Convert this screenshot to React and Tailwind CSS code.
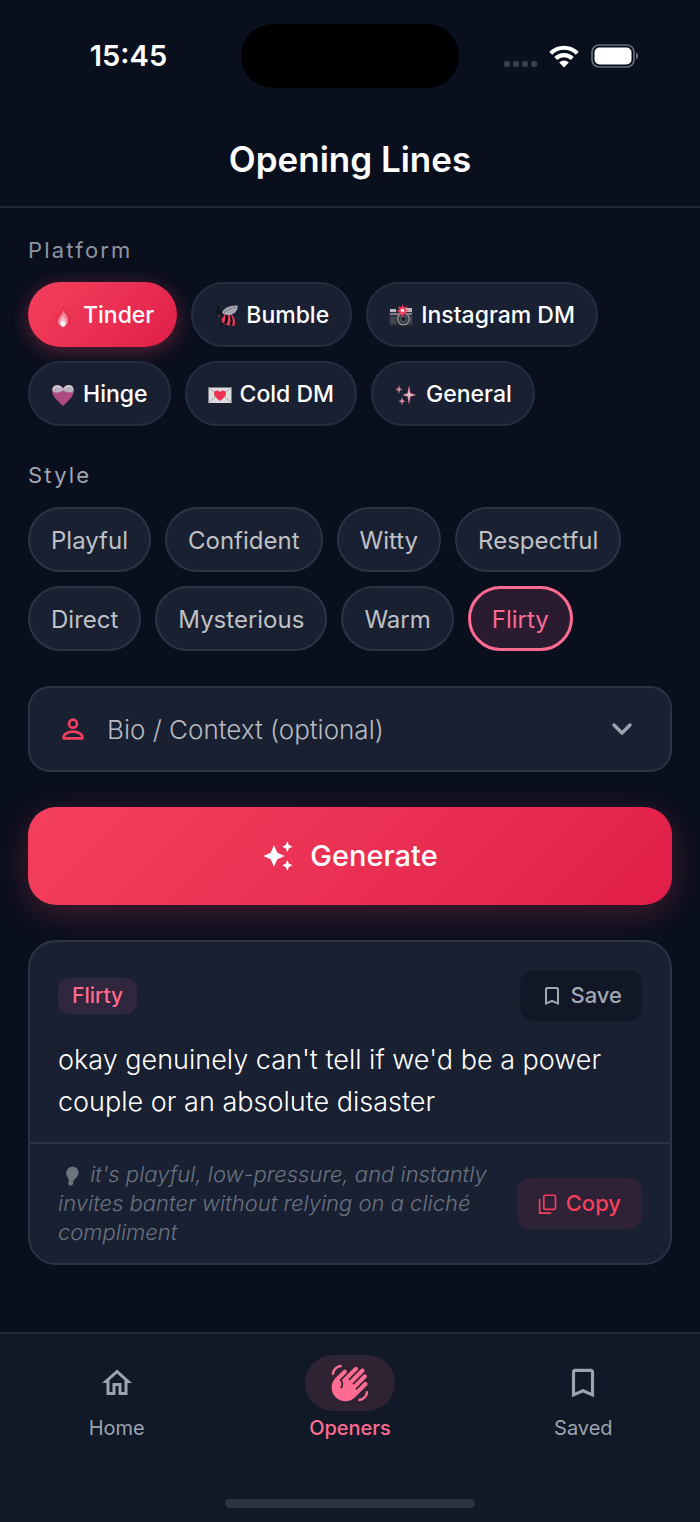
import React, { useState } from "react";
import {
  MdAutoAwesome,
  MdBookmarkBorder,
  MdOutlineHome,
  MdWavingHand,
} from "react-icons/md";

const FlameIcon = () => (
  <svg viewBox="0 0 24 24" className="w-6 h-6 shrink-0" aria-hidden="true">
    <path d="M12.500 2c.5 3 5 5.500 6.500 9 .500-1 .400-2 .200-3 2 3 2.500 6 1.300 9.300C19.300 21 16 23.500 12 23.500S4.700 21 3.600 17.300C2.700 14 3.800 11 5.600 9c-.100 1.500.100 2.500.700 3.300C7.500 8.500 11.500 6.500 12.500 2z" fill="#e8304f" />
    <path d="M12.300 6c.4 3 4.500 5.500 4.700 10 .2 4-2 6.500-5 6.500s-5.400-2.500-5-6c.3-3.500 4.800-6 5.300-10.500z" fill="#f4879a" />
    <path d="M12 12c.500 2 3 3.500 3 6.300 0 2.500-1.300 4.200-3 4.200s-3.200-1.700-3-4.200c.200-2.300 2.700-4.300 3-6.300z" fill="#f3c3cb" />
    <ellipse cx="12" cy="20" rx="2.200" ry="2.800" fill="#f4f4f4" />
  </svg>
);

const BeeIcon = () => (
  <svg viewBox="0 0 24 24" className="w-6 h-6 shrink-0" aria-hidden="true">
    <path d="M3 2l3 3M1 5l4 2M8 19l-1 3M13 21l-1 2.500" stroke="#090b12" strokeWidth="1.300" />
    <path d="M6 9c4-2 10-1 13 3 2 3 4 6 3.500 8.500C19 23 12 22 8 18z" fill="#e53e5b" />
    <path d="M10 8c2 3 2 7 0 11l2.500 1.500c2-4 2-9 .5-12.500zM15 9.500c2 4 2 8 .5 12h2.500c1.500-4 .7-7-1-10.500zM20 13c1.200 3 1.300 6 .7 8.500l1.800-1c.500-2-.500-5-2.500-7.500z" fill="#0b0d14" />
    <circle cx="5.500" cy="11" r="4.300" fill="#14141c" />
    <circle cx="5" cy="12" r="2" fill="#3d2937" />
    <path d="M8 9C9 4 16 1 23.500 1.500 24.500 6 20 12 12.500 11z" fill="#a7a9b2" />
    <path d="M10 8.500c3-2 7-4.500 12-5.500" stroke="#74717f" strokeWidth="1" fill="none" />
  </svg>
);

const CameraIcon = () => (
  <svg viewBox="0 0 24 24" className="w-6 h-6 shrink-0" aria-hidden="true">
    <path d="M.500 7h23v14.500H.500z" fill="#30323b" />
    <path d="M1 5h6v3H1zM16 4h7v4h-7z" fill="#b9bac0" />
    <path d="M1 9h22v2H1z" fill="#777a83" />
    <path d="M2 13v7M4 13v7M6 13v7M22 13v7" stroke="#60636c" strokeWidth=".8" />
    <circle cx="14.500" cy="15" r="6.300" fill="#a5a7ae" />
    <circle cx="14.500" cy="15" r="5.200" fill="#30323c" />
    <circle cx="14.500" cy="15" r="3.400" fill="#60636d" />
    <circle cx="14.500" cy="15" r="2.300" fill="#191b23" />
    <path d="M13.500 0l1.200 3.500L18.500 2l-2 3.500 3.500 1-3.500 1.300 2 3.200-3.700-1.300-1 3.800-1.300-3.700-3.900 1.500 2-3.300L7 6.700l3.600-1L9 2.300l3.500 1.200z" fill="#f43f5e" />
    <circle cx="13.500" cy="6.500" r="1.800" fill="#fbdce2" />
  </svg>
);

const HeartIcon = () => (
  <svg viewBox="0 0 24 24" className="w-6 h-6 shrink-0" aria-hidden="true">
    <path d="M12 23C7 18 1 13.500 1 7.500 1 1 9 .500 12 5c3-4.500 11-4 11 2.500C23 13.500 17 18 12 23z" fill="#ad4b80" />
    <path d="M1.500 8C.500 1 9 .500 12 5.500c3-5 11.500-4.500 10.500 2.500-3 2.500-7 1.500-10.500-.5C8.500 10 4 10.500 1.500 8z" fill="#b6afbc" />
    <path d="M2.500 6c1-3 5-4 8-1M14 5c2-3 6-2.500 7.500 0" stroke="#d9d8de" strokeWidth="1.200" fill="none" />
  </svg>
);

const LetterIcon = () => (
  <svg viewBox="0 0 24 24" className="w-6 h-6 shrink-0" aria-hidden="true">
    <path d="M.500 4.500h23v15.500H.500z" fill="#dedddf" />
    <path d="M.500 4.500l11.500 9 11.500-9M.500 20l8.500-8M23.500 20L15 12" stroke="#aaa9ae" strokeWidth="1" fill="none" />
    <path d="M12 18c-3-2.500-6-4.500-6-7.700C6 7 10.500 6.500 12 9c1.500-2.500 6-2 6 1.300 0 3.200-3 5.200-6 7.700z" fill="#ed3152" />
  </svg>
);

const SparklesIcon = () => (
  <svg viewBox="0 0 24 24" className="w-6 h-6 shrink-0" aria-hidden="true">
    <path d="M15 2l1.600 8L22.500 12l-5.900 1.800L15 22l-1.600-8.200L8 12l5.400-2z" fill="#c94b6a" />
    <path d="M15 4l1.100 6.500 4.900 1.500-4.900 1.300L15 20l-1-6.700-4.500-1.300 4.500-1.500z" fill="#d2c0c9" />
    <path d="M5 2l.8 3.200L8.500 6.500l-2.700 1L5 11l-.8-3.500L1.500 6.500l2.700-1.300zM8 14l.8 3 2.700 1.200-2.700 1L8 22.500l-.8-3.300-2.700-1L7.200 17z" fill="#d98a9f" />
  </svg>
);

const BulbIcon = () => (
  <svg viewBox="0 0 24 24" className="inline-block w-6 h-5 mr-0.5" aria-hidden="true">
    <path d="M15 1c5 0 8.500 4 7 9-1 4-5 5.500-6 8l-.500 4c-.500 2-5.500 2-5.500 0l.500-4.500C10.800 14.500 7 12.500 7.500 8.500 8 4 11 1 15 1z" fill="#6e7480" />
    <path d="M10.500 18l5.500.7" stroke="#545b69" strokeWidth="1" />
  </svg>
);

const PersonIcon = () => (
  <svg viewBox="0 0 24 24" className="w-8 h-8 shrink-0" fill="none" stroke="#f43f5e" strokeWidth="2" strokeLinejoin="round" aria-hidden="true">
    <circle cx="12" cy="8" r="3" />
    <path d="M5 18c0-2.700 4.700-4 7-4s7 1.300 7 4v1H5z" />
  </svg>
);

const ChevronIcon = () => (
  <svg viewBox="0 0 24 24" className="w-8 h-8 shrink-0" fill="none" stroke="#9ca3af" strokeWidth="2.600" strokeLinecap="round" strokeLinejoin="round" aria-hidden="true">
    <path d="M6 9l6 6 6-6" />
  </svg>
);

const CopyIcon = () => (
  <svg viewBox="0 0 24 24" className="w-5 h-5 shrink-0" fill="none" stroke="currentColor" strokeWidth="2" strokeLinecap="round" strokeLinejoin="round" aria-hidden="true">
    <rect x="7" y="1.500" width="14" height="17" rx="1.500" />
    <path d="M2 6.500V23h13" />
  </svg>
);

const WifiIcon = () => (
  <svg viewBox="0 0 30 23" className="w-[30px] h-[23px]" fill="none" stroke="#fff" strokeWidth="4.200" aria-hidden="true">
    <path d="M1.700 8.200a19 19 0 0 1 26.600 0" />
    <path d="M6.700 13.600a11.800 11.800 0 0 1 16.600 0" />
    <path d="M15 22.500l-4.800-5a7 7 0 0 1 9.600 0z" fill="#fff" stroke="none" />
  </svg>
);

const BatteryIcon = () => (
  <svg viewBox="0 0 48 24" className="w-12 h-6" aria-hidden="true">
    <rect x="1" y="1" width="42" height="22" rx="7" fill="none" stroke="#676b78" strokeWidth="1.700" />
    <rect x="3.500" y="3.500" width="37" height="17" rx="5" fill="#fff" />
    <path d="M45 8.500c3 1 3 6 0 7z" fill="#676b78" />
  </svg>
);

const platforms = [
  { name: "Tinder", icon: <FlameIcon /> },
  { name: "Bumble", icon: <BeeIcon /> },
  { name: "Instagram DM", icon: <CameraIcon /> },
  { name: "Hinge", icon: <HeartIcon /> },
  { name: "Cold DM", icon: <LetterIcon /> },
  { name: "General", icon: <SparklesIcon /> },
];

const styles = [
  "Playful",
  "Confident",
  "Witty",
  "Respectful",
  "Direct",
  "Mysterious",
  "Warm",
  "Flirty",
];

const StatusBar = () => (
  <div className="grid grid-cols-[1fr_218px_1fr] items-center pt-6">
    <div className="pl-4 text-center text-[29px] leading-8 font-semibold">
      15:45
    </div>
    <div className="h-16 rounded-full bg-black" />
    <div className="flex items-center justify-center pr-4">
      <div className="flex gap-[3px] pt-4 mr-3">
        <span className="size-1.5 rounded-xs bg-[#3b3f4c]" />
        <span className="size-1.5 rounded-xs bg-[#3b3f4c]" />
        <span className="size-1.5 rounded-xs bg-[#3b3f4c]" />
        <span className="size-1.5 rounded-xs bg-[#3b3f4c]" />
      </div>
      <WifiIcon />
      <div className="ml-3">
        <BatteryIcon />
      </div>
    </div>
  </div>
);

const BottomNav = () => (
  <nav className="mt-auto border-t-2 border-[#1f2a3c] bg-[#111827] pt-[21px] pb-3.5">
    <div className="grid grid-cols-3 text-[20px] leading-7 text-[#9ca3af]">
      <a href="#home" className="flex flex-col items-center gap-[3px]">
        <span className="flex h-14 items-center">
          <MdOutlineHome className="w-9 h-9" />
        </span>
        Home
      </a>
      <a
        href="#openers"
        className="flex flex-col items-center gap-[3px] font-medium text-[#ff6b91]"
        aria-current="page"
      >
        <span className="flex h-14 w-[90px] items-center justify-center rounded-full bg-[#2f2333]">
          <MdWavingHand className="w-10 h-10" />
        </span>
        Openers
      </a>
      <a href="#saved" className="flex flex-col items-center gap-[3px]">
        <span className="flex h-14 items-center">
          <MdBookmarkBorder className="w-[38px] h-[38px]" />
        </span>
        Saved
      </a>
    </div>
    <div className="mx-auto mt-[57px] h-[9px] w-[250px] rounded-full bg-[#2f333e]" />
  </nav>
);

const App = () => {
  const [platform, setPlatform] = useState("Tinder");
  const [style, setStyle] = useState("Flirty");
  const [showBio, setShowBio] = useState(false);
  const [saved, setSaved] = useState(false);

  const line =
    "okay genuinely can't tell if we'd be a power couple or an absolute disaster";

  return (
    <div className="flex min-h-screen flex-col bg-[#0a0f1e] font-['Inter',sans-serif] text-white">
      <StatusBar />
      <header className="border-b-2 border-[#1f2a3c] pt-[49px] pb-6">
        <h1 className="text-center text-[35px] leading-[45px] font-semibold">
          Opening Lines
        </h1>
      </header>

      <main className="flex flex-col gap-[35px] px-7 pt-7 pb-8">
        <section>
          <h2 className="mb-[18px] text-[22px] leading-7 tracking-widest text-[#8d94a2]">
            Platform
          </h2>
          <div className="flex flex-wrap gap-3.5">
            {platforms.map((item) => (
              <button
                key={item.name}
                type="button"
                aria-pressed={platform === item.name}
                onClick={() => setPlatform(item.name)}
                className={`flex h-[65px] items-center gap-2 rounded-full border-2 px-[21px] pt-0.5 text-[23px] font-medium ${
                  platform === item.name
                    ? "border-transparent bg-linear-135 from-[#f43f5e] to-[#e11d48] bg-origin-border shadow-[0_4px_20px_rgba(244,63,94,0.35)]"
                    : "border-[#252e40] bg-[#182031]"
                }`}
              >
                {item.icon}
                {item.name}
              </button>
            ))}
          </div>
        </section>

        <section>
          <h2 className="mb-[18px] text-[22px] leading-7 tracking-widest text-[#a2a6b1]">
            Style
          </h2>
          <div className="flex flex-wrap gap-3.5">
            {styles.map((name) => (
              <button
                key={name}
                type="button"
                aria-pressed={style === name}
                onClick={() => setStyle(name)}
                className={`h-[65px] rounded-full px-[21px] pt-0.5 text-[24px] ${
                  style === name
                    ? "border-3 border-[#ff6b91] bg-[#2a1b31] text-[#ff6b91]"
                    : "border-2 border-[#2d3344] bg-[#182031] text-[#c0c1c5]"
                }`}
              >
                {name}
              </button>
            ))}
          </div>
        </section>

        <div>
          <button
            type="button"
            aria-expanded={showBio}
            onClick={() => setShowBio(!showBio)}
            className="flex h-[86px] w-full items-center rounded-[22px] border-2 border-[#2d3344] bg-[#182031] pr-8 pl-[27px] text-[26px] font-light text-[#b9bac0]"
          >
            <PersonIcon />
            <span className="ml-[18px] flex-1 text-left">
              Bio / Context (optional)
            </span>
            <ChevronIcon />
          </button>
          {showBio && (
            <textarea
              aria-label="Bio / Context"
              className="mt-3.5 w-full rounded-[22px] border-2 border-[#2d3344] bg-[#182031] p-7 text-[23px]"
            />
          )}
        </div>

        <button
          type="button"
          className="flex h-[98px] items-center justify-center gap-4 rounded-[28px] bg-linear-135 from-[#f43f5e] to-[#e11d48] text-[29px] font-medium shadow-[0_8px_32px_rgba(244,63,94,0.25)]"
        >
          <MdAutoAwesome className="w-8 h-8" />
          Generate
        </button>

        <article className="rounded-[28px] border-2 border-[#2d3344] bg-[#182031]">
          <div className="px-7 pt-7 pb-[19px]">
            <div className="mb-[18px] flex items-center justify-between">
              <span className="rounded-xl bg-[#30263d] px-3.5 py-1 text-[21px] leading-7 font-medium text-[#ff6b91]">
                {style}
              </span>
              <button
                type="button"
                aria-pressed={saved}
                onClick={() => setSaved(!saved)}
                className="flex h-[51px] items-center gap-1.5 rounded-[14px] bg-[#111726] px-5 text-[22px] font-medium text-[#a2a6b1]"
              >
                <MdBookmarkBorder className="w-6 h-6" />
                Save
              </button>
            </div>
            <p className="text-[27px] leading-[42px] font-light">{line}</p>
          </div>
          <div className="flex items-center justify-between gap-6 border-t-2 border-[#2d3344] px-7 py-4">
            <p className="text-[22px] leading-[29px] font-light text-[#6b7280] italic">
              <BulbIcon /> it's playful, low-pressure, and instantly invites
              banter without relying on a cliché compliment
            </p>
            <button
              type="button"
              onClick={() => navigator.clipboard.writeText(line)}
              className="flex h-[51px] shrink-0 items-center gap-2 rounded-[14px] bg-[#302236] px-[21px] text-[22px] font-medium text-[#f43f5e]"
            >
              <CopyIcon />
              Copy
            </button>
          </div>
        </article>
      </main>

      <BottomNav />
    </div>
  );
};

export default App;
